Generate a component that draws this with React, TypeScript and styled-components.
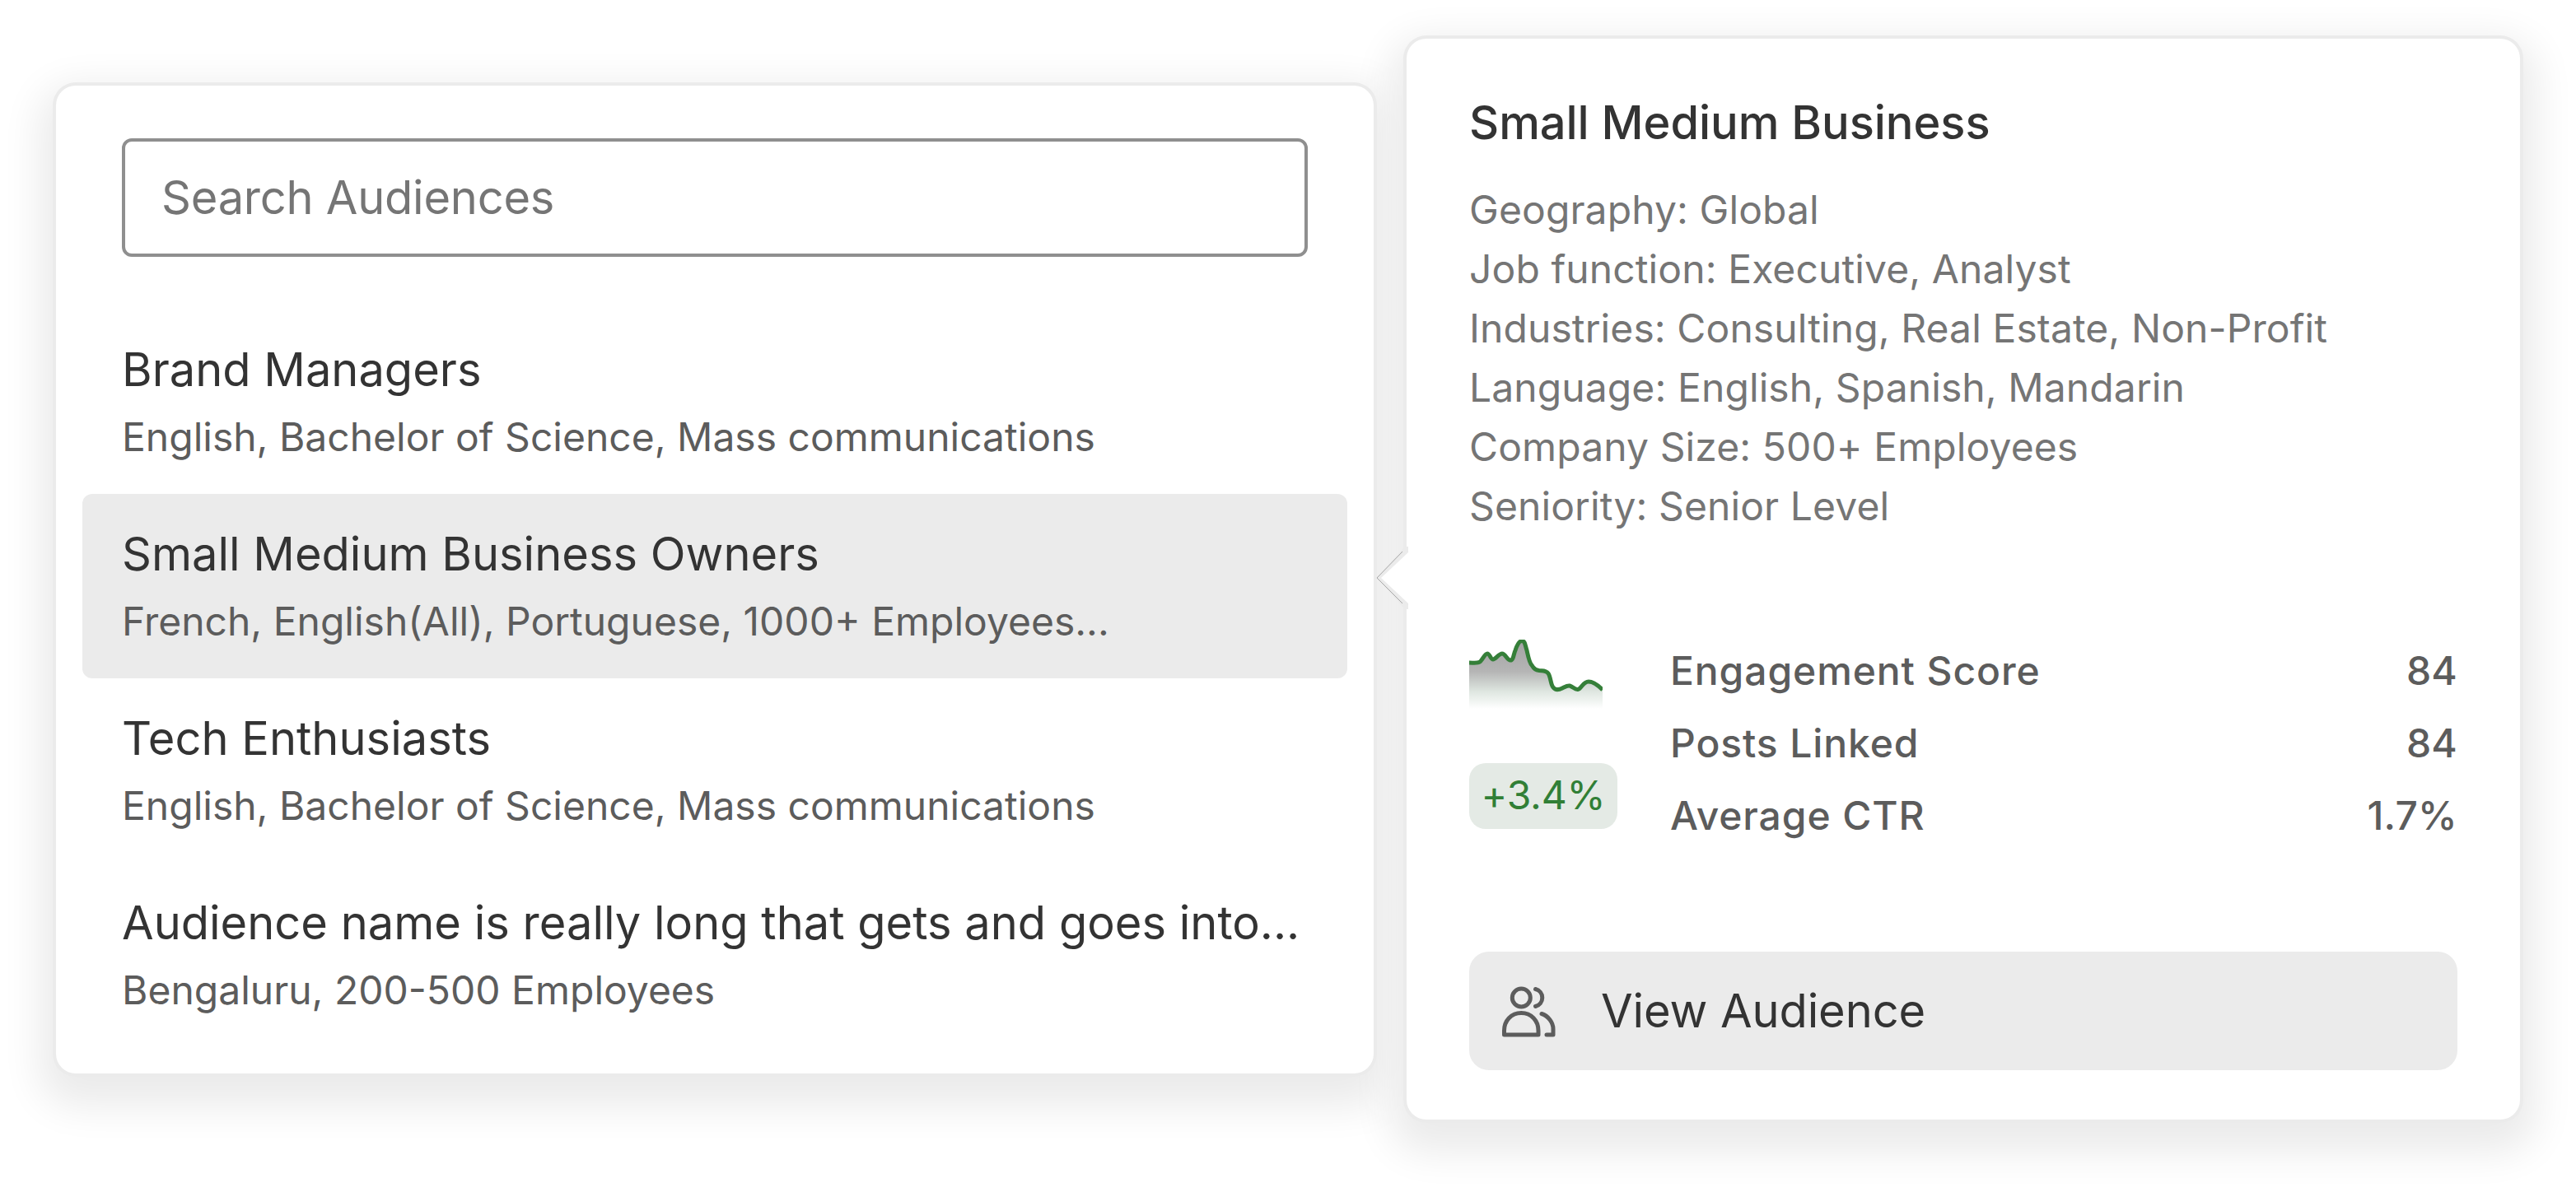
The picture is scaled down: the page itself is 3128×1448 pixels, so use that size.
import styled, { createGlobalStyle, css } from 'styled-components'

const GlobalStyle = createGlobalStyle`
  html {
    background: #ffffff;
  }
  body {
    margin: 0;
    padding: 0;
    font-family: Inter, "Liberation Sans", sans-serif;
    -webkit-font-smoothing: antialiased;
  }
`

const Page = styled.div`
  display: flex;
  align-items: flex-start;
  gap: 40px;
  width: 3128px;
  height: 1448px;
  box-sizing: border-box;
  padding: 44px 0 0 64px;
  overflow: hidden;
`

// shadow sits on a layer behind both cards, opaque colour so overlaps don't get darker
const cardBase = css`
  position: relative;
  box-sizing: border-box;
  border-radius: 24px;
  background: #ffffff;
  box-shadow: 0 0 0 4px #ebebeb;

  &::before {
    content: '';
    position: absolute;
    inset: 0;
    z-index: -1;
    border-radius: 24px;
    box-shadow: 0 20px 48px 20px #ebebeb;
  }
`

const AudienceCard = styled.div`
  ${cardBase}
  width: 1600px;
  height: 1200px;
  margin-top: 60px;
  margin-left: 4px;
  padding: 64px 32px 0;
`

const SearchBox = styled.div`
  display: flex;
  align-items: center;
  height: 144px;
  margin: 0 48px 64px;
  padding: 0 44px;
  box-sizing: border-box;
  border: 4px solid #8f8f8f;
  border-radius: 12px;
  font-size: 56px;
  letter-spacing: -0.25px;
  color: #757575;
`

const AudienceRow = styled.div<{ $active?: boolean }>`
  display: flex;
  flex-direction: column;
  justify-content: center;
  height: 224px;
  padding: 0 48px;
  box-sizing: border-box;
  border-radius: 12px;
  background: ${(p) => (p.$active ? '#ebebeb' : 'transparent')};
`

const AudienceName = styled.div`
  font-size: 56px;
  line-height: 72px;
  color: #333333;
  white-space: nowrap;
`

const AudienceMeta = styled.div`
  margin-top: 14px;
  font-size: 48px;
  line-height: 64px;
  color: #5c5c5c;
  white-space: nowrap;
`

const DetailCard = styled.div`
  ${cardBase}
  width: 1352px;
  height: 1313px;
  margin-top: 3px;
  padding: 74px 76px 60px;
  display: flex;
  flex-direction: column;
`

const Notch = styled.svg`
  position: absolute;
  left: -38px;
  top: 617px;
  display: block;
`

const DetailTitle = styled.div`
  font-size: 56px;
  line-height: 56px;
  font-weight: 500;
  letter-spacing: -0.05px;
  color: #333333;
`

const FactList = styled.div`
  margin-top: 42px;
`

const Fact = styled.div`
  font-size: 48px;
  line-height: 72px;
  letter-spacing: 0.1px;
  color: #757575;
  white-space: nowrap;
`

const StatsRow = styled.div`
  display: flex;
  margin-top: 120px;
  gap: 64px;
`

const TrendColumn = styled.div`
  display: flex;
  flex-direction: column;
  align-items: flex-start;
  width: 180px;
  padding-top: 6px;
  gap: 66px;
`

const Badge = styled.div`
  width: 180px;
  height: 80px;
  border-radius: 20px;
  background: #e4eae5;
  color: #317f36;
  font-size: 48px;
  line-height: 78px;
  letter-spacing: -0.2px;
  text-align: center;
`

const Metrics = styled.div`
  flex: 1;
  display: flex;
  flex-direction: column;
`

const Metric = styled.div`
  display: flex;
  justify-content: space-between;
  height: 88px;
  line-height: 88px;
  font-size: 48px;
  font-weight: 500;
  color: #5c5c5c;
`

const MetricLabel = styled.span`
  letter-spacing: 0.9px;
`

const MetricValue = styled.span`
  letter-spacing: 0.2px;
`

const ViewButton = styled.div`
  display: flex;
  align-items: center;
  height: 144px;
  margin-top: auto;
  padding-left: 36px;
  gap: 52px;
  border-radius: 24px;
  background: #ebebeb;
  font-size: 56px;
  letter-spacing: -0.1px;
  color: #333333;
`

const SPARK_LINE =
  'M0 28 C5 28 10 29 13 27 C16 25 19 17 22 17 C25 17 26 24 29 24 C32 24 36 17 40 17 C44 17 46 25 50 25 C54 25 54 17 56 13 C58 7 61 1.5 64 1.5 C68 1.5 68 7 70 13 C72 22 73 28 76 31 C79 36 81 37 85 37.5 C90 38 93 37 96 41 C99 45 99 55 102 58 C105 62 109 61 113 59 C117 57 119 55.5 122 56 C126 57 128 61 132 60.5 C136 60 138 51 145 51 C150 51 157 56 162 61'

const Sparkline = () => (
  <svg width="162" height="84" viewBox="0 0 162 84" fill="none" style={{ display: 'block' }}>
    <defs>
      <linearGradient id="sparkFill" x1="0" y1="0" x2="0" y2="1">
        <stop offset="0" stopColor="#a3a3a3" />
        <stop offset="0.45" stopColor="#b5b5b5" />
        <stop offset="0.75" stopColor="#dfe7e1" />
        <stop offset="1" stopColor="#ffffff" />
      </linearGradient>
    </defs>
    <path d={`${SPARK_LINE} V84 H0 Z`} fill="url(#sparkFill)" />
    <path d={SPARK_LINE} stroke="#357f39" strokeWidth="5" />
  </svg>
)

const UsersIcon = () => (
  <svg width="72" height="68" viewBox="0 0 72 68" fill="none" stroke="#5c5c5c" strokeWidth="5" strokeLinecap="round" strokeLinejoin="round">
    <circle cx="27.3" cy="18" r="11" />
    <path d="M6.5 63 V58 C6.5 46 15 36.5 27.3 36.5 C39.5 36.5 48 46 48 58 V63 Z" />
    <path d="M44.5 7.5 A10.8 10.8 0 0 1 44.5 28.5" />
    <path d="M52 37.5 C60 40 66 48 66 56 V63 H58" />
  </svg>
)

const audiences = [
  { name: 'Brand Managers', meta: 'English, Bachelor of Science, Mass communications' },
  { name: 'Small Medium Business Owners', meta: 'French, English(All), Portuguese, 1000+ Employees...', active: true },
  { name: 'Tech Enthusiasts', meta: 'English, Bachelor of Science, Mass communications' },
  { name: 'Audience name is really long that gets and goes into...', meta: 'Bengaluru, 200-500 Employees' },
]

const facts = [
  'Geography: Global',
  'Job function: Executive, Analyst',
  'Industries: Consulting, Real Estate, Non-Profit',
  'Language: English, Spanish, Mandarin',
  'Company Size: 500+ Employees',
  'Seniority: Senior Level',
]

const metrics = [
  { label: 'Engagement Score', value: '84' },
  { label: 'Posts Linked', value: '84' },
  { label: 'Average CTR', value: '1.7%' },
]

const App = () => {
  return (
    <Page>
      <GlobalStyle />
      <AudienceCard>
        <SearchBox>Search Audiences</SearchBox>
        {audiences.map((a) => (
          <AudienceRow key={a.name} $active={a.active}>
            <AudienceName>{a.name}</AudienceName>
            <AudienceMeta>{a.meta}</AudienceMeta>
          </AudienceRow>
        ))}
      </AudienceCard>
      <DetailCard>
        <Notch width="40" height="76" viewBox="0 0 40 76">
          <path d="M40 0 V76 H36 L2 38 L36 0 Z" fill="#ebebeb" />
          <path d="M33 6 L2 38 L33 69" fill="none" stroke="#a8a8a8" strokeWidth="1" />
          <path d="M40 7 L7 38 L40 69 Z" fill="#ffffff" />
        </Notch>
        <DetailTitle>Small Medium Business</DetailTitle>
        <FactList>
          {facts.map((f) => (
            <Fact key={f}>{f}</Fact>
          ))}
        </FactList>
        <StatsRow>
          <TrendColumn>
            <Sparkline />
            <Badge>+3.4%</Badge>
          </TrendColumn>
          <Metrics>
            {metrics.map((m) => (
              <Metric key={m.label}>
                <MetricLabel>{m.label}</MetricLabel>
                <MetricValue>{m.value}</MetricValue>
              </Metric>
            ))}
          </Metrics>
        </StatsRow>
        <ViewButton>
          <UsersIcon />
          View Audience
        </ViewButton>
      </DetailCard>
    </Page>
  )
}

export default App
